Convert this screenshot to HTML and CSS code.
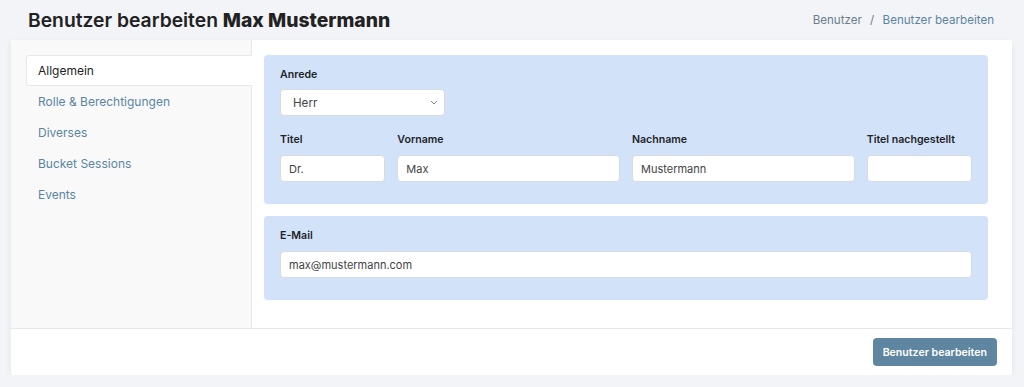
FILE: index.html
```html
<!DOCTYPE html>
<html lang="de">
<head>
    <meta charset="UTF-8">
    <meta name="viewport" content="width=device-width, initial-scale=1.0">
    <title>Benutzer bearbeiten</title>
    <link rel="stylesheet" href="styles.css">
</head>
<body>
    <header class="page-header">
        <h1>Benutzer bearbeiten <strong>Max Mustermann</strong></h1>
        <nav class="breadcrumb">
            <span class="crumb">Benutzer</span>
            <span class="sep">/</span>
            <a href="#" class="crumb-active">Benutzer bearbeiten</a>
        </nav>
    </header>

    <div class="card">
        <div class="card-body">
            <ul class="side-nav">
                <li class="active">Allgemein</li>
                <li>Rolle &amp; Berechtigungen</li>
                <li>Diverses</li>
                <li>Bucket Sessions</li>
                <li>Events</li>
            </ul>

            <div class="content">
                <div class="panel">
                    <div class="form-group">
                        <label for="anrede">Anrede</label>
                        <select id="anrede" class="select">
                            <option>Herr</option>
                            <option>Frau</option>
                        </select>
                    </div>
                    <div class="row">
                        <div class="col col-2">
                            <label for="titel">Titel</label>
                            <input type="text" id="titel" value="Dr.">
                        </div>
                        <div class="col col-4">
                            <label for="vorname">Vorname</label>
                            <input type="text" id="vorname" value="Max">
                        </div>
                        <div class="col col-4">
                            <label for="nachname">Nachname</label>
                            <input type="text" id="nachname" value="Mustermann">
                        </div>
                        <div class="col col-2">
                            <label for="titel-nach">Titel nachgestellt</label>
                            <input type="text" id="titel-nach" value="">
                        </div>
                    </div>
                </div>

                <div class="panel">
                    <label for="email">E-Mail</label>
                    <input type="text" id="email" value="max@mustermann.com">
                </div>
            </div>
        </div>
        <div class="card-footer">
            <button>Benutzer bearbeiten</button>
        </div>
    </div>
</body>
</html>
```

FILE: styles.css
```css
* {
    box-sizing: border-box;
}
body {
    margin: 0;
    padding: 0 12px 0 11px;
    font-family: Inter, 'Noto Sans', sans-serif;
    color: #222;
    background-color: #f3f4f8;
}
.page-header {
    display: flex;
    align-items: center;
    justify-content: space-between;
    height: 40px;
    padding: 0 18px 0 17px;
}
h1 {
    margin: 0;
    font-size: 19.3px;
    font-weight: 600;
    color: #222;
}
h1 strong {
    font-weight: 800;
}
.breadcrumb {
    font-size: 11.6px;
    color: #6b7d8e;
}
.breadcrumb .sep {
    margin: 0 5px;
}
.crumb-active {
    color: #5b84a3;
    text-decoration: none;
}
.card {
    background-color: #fff;
    border-radius: 2px;
    box-shadow: 0 2px 6px rgba(0, 0, 0, 0.07);
}
.card-body {
    display: flex;
    border-bottom: 1px solid #e4e7ee;
}
.side-nav {
    list-style: none;
    margin: 0;
    padding: 15px 0 20px 15px;
    width: 241px;
    flex-shrink: 0;
    background-color: #f9f9f9;
    border-right: 1px solid #e6e6e6;
}
.side-nav li {
    height: 31px;
    line-height: 31px;
    padding-left: 12px;
    font-size: 12px;
    color: #5b84a3;
}
.side-nav li.active {
    margin-right: -1px;
    background-color: #fff;
    color: #222;
    border: 1px solid #e8e8e8;
    border-right: none;
    border-radius: 3px 0 0 3px;
    padding-left: 11px;
    line-height: 29px;
}
.content {
    flex: 1;
    padding: 15px 24px 28px 12px;
}
.panel {
    background-color: #d2e3f9;
    border-radius: 4px;
    padding: 13px 16px 22px 16px;
}
.panel + .panel {
    margin-top: 12px;
}
.form-group {
    margin-bottom: 17px;
}
label {
    display: block;
    font-size: 10.6px;
    font-weight: 600;
    color: #1f2328;
    margin-bottom: 9px;
}
input[type="text"],
.select {
    display: block;
    width: 100%;
    height: 27px;
    padding: 0 8px;
    border: 1px solid #d6dbe3;
    border-radius: 4px;
    background-color: #fff;
    font-family: inherit;
    font-size: 11px;
    color: #444;
}
.select {
    width: 165px;
    padding-left: 12px;
    font-size: 11.6px;
    appearance: none;
    background-image: url("data:image/svg+xml,%3Csvg xmlns='http://www.w3.org/2000/svg' width='8' height='5' viewBox='0 0 8 5'%3E%3Cpath d='M1 1l3 3 3-3' fill='none' stroke='%23888' stroke-width='1'/%3E%3C/svg%3E");
    background-repeat: no-repeat;
    background-position: right 6px center;
}
.form-group label {
    margin-bottom: 8px;
}
.row {
    display: flex;
    margin: 0 -6px;
}
.col {
    padding: 0 6px;
}
.col-2 {
    flex: 0 0 16.6667%;
}
.col-4 {
    flex: 0 0 33.3333%;
}
.card-footer {
    display: flex;
    justify-content: flex-end;
    padding: 9px 15px 9px 0;
}
button {
    height: 28px;
    padding: 0 10px;
    border: none;
    border-radius: 4px;
    background-color: #5f86a1;
    color: #fff;
    font-family: inherit;
    font-size: 10.6px;
    font-weight: 600;
    cursor: pointer;
}
```
